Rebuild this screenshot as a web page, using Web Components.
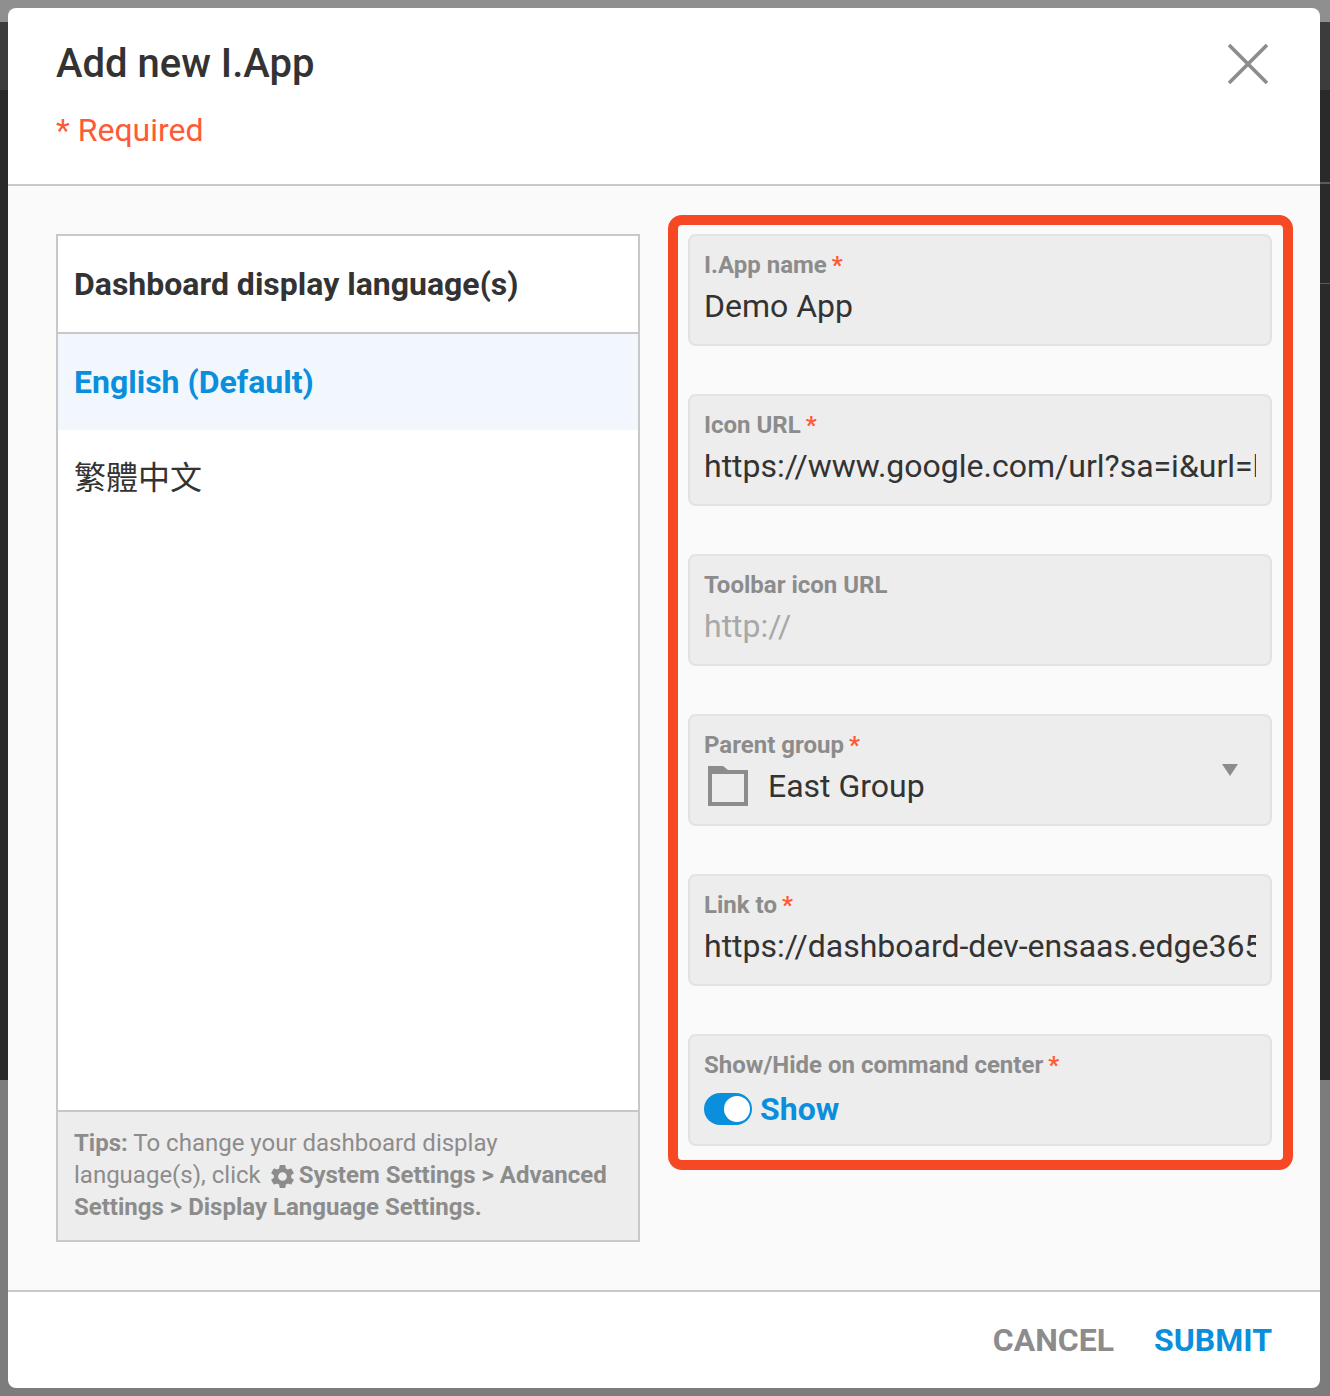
<!doctype html>
<html><head><meta charset="utf-8">
<style>
html,body{margin:0;padding:0}
body{width:1330px;height:1396px;overflow:hidden;font-family:Roboto,"Noto Sans CJK TC",sans-serif;position:relative;background:#2a2a2a}
</style></head><body>
<app-backdrop></app-backdrop>
<add-app-dialog>
  <lang-panel slot="left"></lang-panel>
  <form-field label="I.App name" req value="Demo App"></form-field>
  <form-field label="Icon URL" req value="https://www.google.com/url?sa=i&amp;url=https%3A%2F%2Fwww.example.com"></form-field>
  <form-field label="Toolbar icon URL" placeholder="http://"></form-field>
  <form-field label="Parent group" req kind="select" value="East Group"></form-field>
  <form-field label="Link to" req value="https://dashboard-dev-ensaas.edge365.com/"></form-field>
  <form-field label="Show/Hide on command center" req kind="toggle" value="Show"></form-field>
</add-app-dialog>
<script>
const icons={
 close:'<svg width="40" height="40" viewBox="0 0 40 40" style="display:block"><path d="M1 1L39 39M39 1L1 39" stroke="#8c8c8c" stroke-width="3.6" fill="none"/></svg>',
 gear:'<svg width="29" height="29" viewBox="0 0 24 24" style="vertical-align:-8px;margin-left:1px;margin-right:2px"><path fill="#8c8c8c" d="M19.14 12.94c.04-.3.06-.61.06-.94s-.02-.64-.07-.94l2.03-1.58a.5.5 0 0 0 .12-.61l-1.92-3.32a.49.49 0 0 0-.59-.22l-2.39.96a7 7 0 0 0-1.62-.94l-.36-2.54a.48.48 0 0 0-.48-.41h-3.84a.47.47 0 0 0-.47.41l-.36 2.54c-.59.24-1.13.57-1.62.94l-2.39-.96a.48.48 0 0 0-.59.22L2.74 8.87a.47.47 0 0 0 .12.61l2.03 1.58c-.05.3-.09.63-.09.94s.02.64.07.94l-2.03 1.58a.5.5 0 0 0-.12.61l1.92 3.32c.12.22.37.29.59.22l2.39-.96c.5.38 1.03.7 1.62.94l.36 2.54c.05.24.24.41.48.41h3.84c.24 0 .44-.17.47-.41l.36-2.54c.59-.24 1.13-.56 1.62-.94l2.39.96c.22.08.47 0 .59-.22l1.92-3.32a.47.47 0 0 0-.12-.61l-2.01-1.58zM12 15.6A3.6 3.6 0 1 1 12 8.4a3.6 3.6 0 0 1 0 7.2z"/></svg>',
 folder:'<svg width="40" height="40" viewBox="0 0 40 40" style="display:block"><path fill="#8c8c8c" fill-rule="evenodd" d="M0 0H15L20 4H40V40H0ZM4 8V36H36V8Z"/></svg>',
 caret:'<svg width="16" height="12" viewBox="0 0 16 12" style="display:block"><path fill="#8c8c8c" d="M0 0H16L8 12Z"/></svg>'
};
function def(name,css,html){
  customElements.define(name,class extends HTMLElement{
    constructor(){super();const r=this.attachShadow({mode:'open'});
      r.innerHTML='<style>'+css+'</style>'+html(this);}
  });
}
def('app-backdrop',`
:host{display:flex;flex-direction:column;width:1330px;height:1396px}
.a{height:22px;background:#8f8f8f}.b{height:68px;background:#3c3c3c}
.c{height:990px;background:linear-gradient(#5a5a5a,#5a5a5a) right 0 top 92px/10px 2px no-repeat,linear-gradient(#5a5a5a,#5a5a5a) right 0 top 193px/10px 1px no-repeat,#2a2a2a}.d{flex:1;background:#7c7c7c}`,
()=>'<div class="a"></div><div class="b"></div><div class="c"></div><div class="d"></div>');

def('add-app-dialog',`
:host{display:flex;flex-direction:column;position:absolute;left:8px;top:8px;width:1312px;height:1380px;background:#fff;border-radius:8px;overflow:hidden;color:#333}
header{box-sizing:border-box;padding:31px 48px 0;position:relative;border-bottom:2px solid #c8c8c8;height:178px;flex:none}
h1{margin:0;font-size:40px;line-height:50px;font-weight:500;color:#333}
.req{margin-top:21px;font-size:32px;line-height:40px;color:#ff5a36}
.x{position:absolute;right:52px;top:36px;width:40px;height:40px}
main{flex:1;min-height:0;background:#fafafa;display:grid;grid-template-columns:584px 584px;column-gap:48px;padding:48px;box-sizing:border-box}
.right{position:relative;display:flex;flex-direction:column;gap:48px}
.mark{position:absolute;left:-20px;right:-21px;top:-19px;bottom:72px;border:10px solid #f64923;border-radius:14px;pointer-events:none}
footer{flex:none;height:98px;box-sizing:border-box;border-top:2px solid #c8c8c8;display:flex;justify-content:flex-end;align-items:center;gap:40px;padding:0 48px 0 0;font-size:32px;font-weight:700;color:#8c8c8c}
footer b{font-weight:700;color:#0a8fdc}`,
()=>`<header><h1>Add new I.App</h1><div class="req">* Required</div><div class="x">${icons.close}</div></header>
<main><slot name="left"></slot><div class="right"><slot></slot><div class="mark"></div></div></main>
<footer><span>CANCEL</span><b>SUBMIT</b></footer>`);

def('lang-panel',`
:host{display:flex;flex-direction:column;border:2px solid #c8c8c8;background:#fff;box-sizing:border-box;height:1008px}
.t{box-sizing:border-box;padding:0 16px;display:flex;align-items:center;font-size:32px;font-weight:700;color:#333;border-bottom:2px solid #c8c8c8;flex:none;height:98px}
.i{height:96px;padding:0 16px;display:flex;align-items:center;font-size:32px;flex:none}
.cjk{padding-bottom:6px;height:90px}
.on{background:#f2f7fd;color:#0a8fdc;font-weight:700}
.sp{flex:1}
.tips{flex:none;height:130px;box-sizing:border-box;border-top:2px solid #c8c8c8;background:#ededed;padding:15px 16px 0;font-size:24px;line-height:32px;color:#8c8c8c}
.tips div{height:32px;white-space:nowrap}
.tips b{font-weight:700}`,
()=>`<div class="t">Dashboard display language(s)</div><div class="i on">English (Default)</div><div class="i cjk">繁體中文</div><div class="sp"></div>
<div class="tips"><div><b>Tips:</b> To change your dashboard display</div><div>language(s), click ${icons.gear}<b>System Settings &gt; Advanced</b></div><div><b>Settings &gt; Display Language Settings.</b></div></div>`);

def('form-field',`
:host{display:block;height:112px;box-sizing:border-box;border:2px solid #e2e2e2;border-radius:8px;background:#ededed;padding:14px 14px 0;position:relative}
.l{font-size:24px;line-height:30px;font-weight:700;color:#8c8c8c;white-space:nowrap}
.l i{font-style:normal;color:#ff5a36;margin-left:5px}
.v{margin-top:5px;height:42px;font-size:32px;line-height:42px;color:#333;white-space:nowrap;overflow:hidden;width:552px}
.ph{color:#a8a8a8}
.sel{display:flex;align-items:center;gap:20px;margin-top:5px;height:42px;font-size:32px;color:#333;padding-left:4px}
.caret{position:absolute;right:32px;top:48px}
.tg{display:flex;align-items:center;gap:8px;margin-top:8px;height:42px;font-size:32px;font-weight:700;color:#0a8fdc}
.sw{width:48px;height:32px;border-radius:16px;background:#0a8fdc;position:relative;flex:none}
.sw::after{content:"";position:absolute;right:2px;top:3px;width:26px;height:26px;border-radius:50%;background:#fff}`,
h=>{
 const k=h.getAttribute('kind'),v=h.getAttribute('value')||'',p=h.getAttribute('placeholder');
 const l=`<div class="l">${h.getAttribute('label')}${h.hasAttribute('req')?'<i>*</i>':''}</div>`;
 const e=v.replace(/&/g,'&amp;');
 if(k==='select')return l+`<div class="sel">${icons.folder}<span>${e}</span></div><div class="caret">${icons.caret}</div>`;
 if(k==='toggle')return l+`<div class="tg"><div class="sw"></div><span>${e}</span></div>`;
 return l+(p?`<div class="v ph">${p}</div>`:`<div class="v">${e}</div>`);
});
</script>
</body></html>
